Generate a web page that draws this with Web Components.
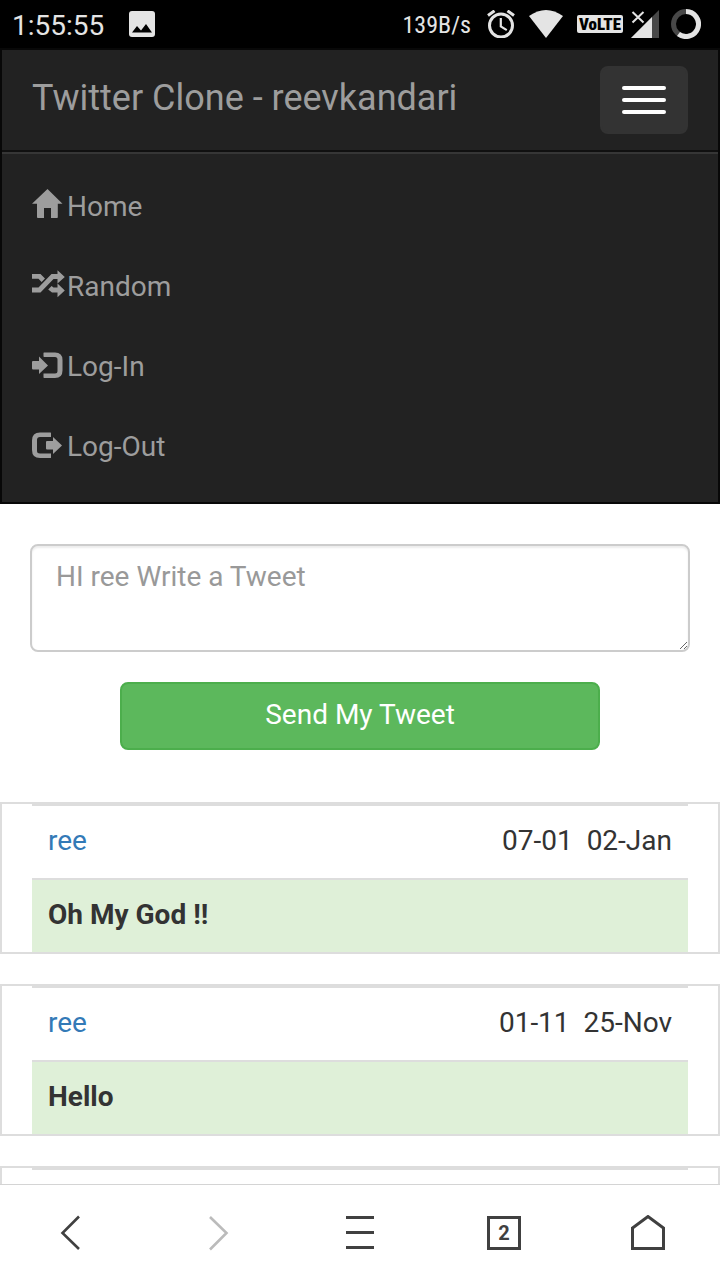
<!DOCTYPE html>
<html lang="en">
<head>
<meta charset="utf-8">
<meta name="viewport" content="width=device-width, initial-scale=1">
<title>Twitter Clone</title>
<style>
body{margin:0;background:#fff;color:#333;font:28px/40px Roboto,"Liberation Sans",sans-serif}
</style>
</head>
<body>
<phone-shell>
  <status-bar slot="top"></status-bar>
  <nav-bar heading="Twitter Clone - reevkandari">
    <nav-item icon="home">Home</nav-item>
    <nav-item icon="random">Random</nav-item>
    <nav-item icon="login">Log-In</nav-item>
    <nav-item icon="logout">Log-Out</nav-item>
  </nav-bar>
  <tweet-form></tweet-form>
  <tweet-card author="ree" time="07-01" date="02-Jan">Oh My God !!</tweet-card>
  <tweet-card author="ree" time="01-11" date="25-Nov">Hello</tweet-card>
  <tweet-card author="" time="" date=""></tweet-card>
  <browser-bar slot="bottom"></browser-bar>
</phone-shell>
<script>
const define = (name, render) => customElements.define(name, class extends HTMLElement {
  constructor() {
    super();
    this.attachShadow({mode: 'open'});
  }
  connectedCallback() {
    this.shadowRoot.innerHTML = '<style>*{box-sizing:border-box}</style>' + render(this);
  }
});

define('phone-shell', () => `
<style>
:host{display:flex;flex-direction:column;height:100vh}
main{flex:1;min-height:0;overflow-y:auto;scrollbar-width:none}
</style>
<slot name="top"></slot><main><slot></slot></main><slot name="bottom"></slot>`);

define('status-bar', () => `
<style>
:host{display:flex;align-items:center;justify-content:space-between;height:48px;padding:0 19px 0 12px;background:#000;color:#e4e4e4}
div{display:flex;align-items:center}
.left{gap:25px}
.right{gap:8px}
.time{line-height:48px;padding-top:4px}
.speed{font:24px/48px "Roboto Condensed",Roboto,sans-serif;padding:2px 8px 0 0}
.volte{width:46px;height:18px;border-radius:2px;background:#e4e4e4;color:#000;font:900 17px/18px "Roboto Condensed",Roboto,sans-serif;text-align:center}
svg{display:block}
</style>
<div class="left">
  <span class="time">1:55:55</span>
  <svg width="26" height="26" viewBox="0 0 26 26"><rect width="26" height="26" rx="3" fill="#e4e4e4"/><path d="M3 21.500 8 15l4 4.500 5-6.500 6 8.500z"/></svg>
</div>
<div class="right">
  <span class="speed">139B/s</span>
  <svg width="34" height="28" viewBox="0 0 34 28" fill="none" stroke="#e4e4e4"><circle cx="14" cy="15.500" r="11.500" stroke-width="3"/><path d="M1 5.500 7.500.8M27 5.500 20.500.8" stroke-width="3"/><path d="M13.800 8v8.500l6 3.600" stroke-width="2.200"/></svg>
  <svg width="40" height="28" viewBox="0 0 40 28"><path d="M0 6Q17-6 34 6L17 28z" fill="#e4e4e4"/></svg>
  <span class="volte">VoLTE</span>
  <svg width="32" height="28" viewBox="0 0 32 28"><path d="M28 0v28H0z" fill="#484848"/><path d="M21 7v21H0z" fill="#e4e4e4"/><path d="M1.500 2 12.500 12.500M12.500 2 1.500 12.500" stroke="#000" stroke-width="5"/><path d="M1.500 2 12.500 12.500M12.500 2 1.500 12.500" stroke="#e4e4e4" stroke-width="2"/></svg>
  <svg width="30" height="30" viewBox="0 0 30 30" fill="none" stroke-width="5"><circle cx="15" cy="15" r="12.500" stroke="#484848"/><path d="M15 2.500A12.500 12.500 0 1 1 7.500 25" stroke="#e4e4e4"/></svg>
</div>`);

define('nav-bar', host => `
<style>
:host{display:block;background:#222;border:2px solid #080808;color:#9d9d9d}
header{display:flex;justify-content:space-between;align-items:center;height:100px;padding:0 30px}
.brand{color:inherit;text-decoration:none;font-size:36px;line-height:40px;padding-bottom:4px}
button{display:flex;flex-direction:column;justify-content:center;align-items:center;gap:8px;width:88px;height:68px;padding:0;border:2px solid #333;border-radius:8px;background:#333}
i{width:44px;height:4px;border-radius:2px;background:#fff}
nav{border-top:2px solid #101010;box-shadow:inset 0 2px #363636;padding:14px 30px 16px}
</style>
<header><a class="brand" href="#">${host.getAttribute('heading')}</a><button aria-label="Toggle navigation" aria-expanded="true"><i></i><i></i><i></i></button></header>
<nav><slot></slot></nav>`);

const icons = {
  home: '<path d="M15.500 1 30.500 15.700H25.800V29.200Q25.800 30 25 30H19V20H12V30H6Q5 30 5 29.200V15.700H0z"/>',
  random: '<path d="M0 6h8.500L13 10.500 9.600 14 6.500 10.800H0zM0 19.500h6.500L19.500 6H25.500V2.200L32.800 9 25.500 15.500V11H21.500L8.500 24.500H0zM19.600 18 16.200 21.400 20 24.500h5.500V29.200L32.800 22.600 25.500 15.600V19.500H21.500z"/>',
  login: '<path d="M0 14Q0 13 1 13H7V8.500L16 17.500 7 26V21.500H1Q0 21.500 0 20.500zM12 4.500H23Q30.500 4.500 30.500 12V22.500Q30.500 30 23 30H12Q11.500 30 11.500 29V25.500H23Q25.500 25.500 25.500 23V11.500Q25.500 9 23 9H12Q11.500 9 11.500 8V5Q11.500 4.500 12 4.500z"/>',
  logout: '<path d="M18.500 4.500Q19 4.500 19 5V9H8Q5 9 5 12V23Q5 25.500 8 25.500H19V29.500Q19 30 18.500 30H8Q0 30 0 22V12.500Q0 4.500 8 4.500zM14 14Q14 13 15 13H21V9L30 17.500 21 26V21.500H15Q14 21.500 14 20.500z"/>'
};

define('nav-item', host => `
<style>
:host{display:block}
a{display:flex;align-items:center;height:80px;color:inherit;text-decoration:none}
svg{flex:none;fill:#9d9d9d}
span{padding-top:2px}
</style>
<a href="#"><svg width="35" height="36" viewBox="0 0 35 36">${icons[host.getAttribute('icon')]}</svg><span><slot></slot></span></a>`);

define('tweet-form', () => `
<style>
:host{display:block;padding:40px 30px 52px}
form{display:flex;flex-direction:column;align-items:center;gap:30px}
textarea{display:block;width:100%;height:108px;margin:0;padding:11px 24px 13px;border:2px solid #ccc;border-radius:8px;background:#fff;box-shadow:inset 0 2px 2px rgba(0,0,0,.075);color:#555;font:inherit;resize:vertical;overflow:hidden}
textarea::placeholder{color:#999}
button{width:80%;max-width:480px;padding:11px 24px 13px;border:2px solid #4cae4c;border-radius:8px;background:#5cb85c;color:#fff;font:inherit}
</style>
<form><textarea aria-label="Tweet" placeholder="HI ree Write a Tweet"></textarea><button type="button">Send My Tweet</button></form>`);

define('tweet-card', host => `
<style>
:host{display:block;border:2px solid #ddd;padding:0 30px;margin-bottom:30px}
table{width:100%;border-collapse:separate;border-spacing:0}
td{height:74px;padding:15px 16px 17px;border-top:2px solid #ddd}
.when{text-align:right;white-space:pre}
.text{background:#dff0d8;font-weight:700}
a{color:#337ab7;text-decoration:none}
</style>
<table><tr><td><a href="#">${host.getAttribute('author')}</a></td><td class="when">${host.getAttribute('time')}  ${host.getAttribute('date')}</td></tr>
<tr><td class="text" colspan="2"><slot></slot></td></tr></table>`);

define('browser-bar', () => `
<style>
:host{display:grid;grid-template-columns:repeat(5,1fr);height:96px;border-top:1px solid #d4d4d4;background:#fff;box-sizing:border-box}
button{display:flex;align-items:center;justify-content:center;padding:0;border:0;background:none;color:#404040}
svg{display:block;fill:none;stroke:#404040;stroke-width:3}
span{width:34px;height:34px;border:3px solid #404040;font:700 20px/28px Roboto,sans-serif}
</style>
<button aria-label="Back"><svg width="36" height="36" viewBox="0 0 36 36"><path d="M25 1.500 8.500 18 25 34" stroke-width="2.600"/></svg></button>
<button aria-label="Forward" disabled><svg width="36" height="36" viewBox="0 0 36 36"><path d="M12 2 28.500 18 12 34.500" stroke="#bbb" stroke-width="2.600"/></svg></button>
<button aria-label="Menu"><svg width="36" height="36" viewBox="0 0 36 36"><path d="M4 2.500H32M4 17.500H32M4 32.500H32"/></svg></button>
<button aria-label="Tabs"><span>2</span></button>
<button aria-label="Home page"><svg width="36" height="36" viewBox="0 0 36 36"><path d="M2.500 33.500V13L18 1.500 33.500 13V33.500z"/></svg></button>`);
</script>
</body>
</html>
